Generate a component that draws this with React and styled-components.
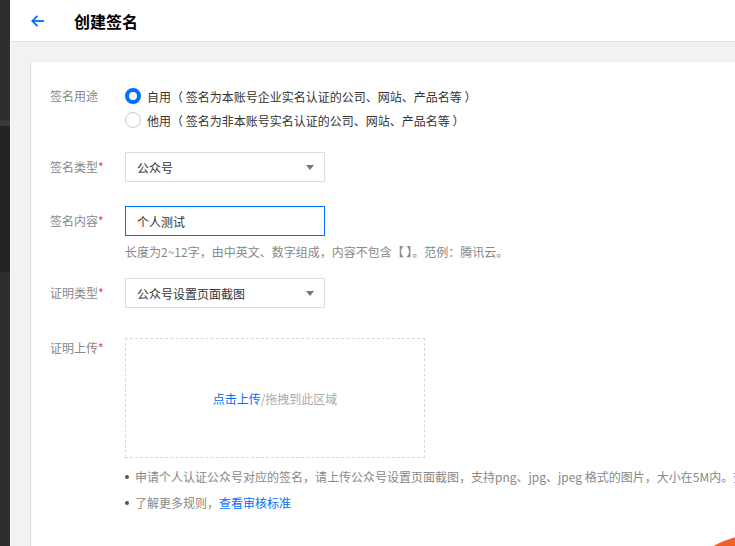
import React from 'react';
import styled, { createGlobalStyle } from 'styled-components';

//***Colors***/
const blue = '#006eff';
const grey = '#888';
const text = '#333';
const line = '#dddddd';

const GlobalStyle = createGlobalStyle`
    html, body {
        margin: 0;
        padding: 0;
        overflow: hidden;
        background: #f2f2f2;
    }
    body {
        font-family: "Noto Sans CJK SC", "Noto Sans", sans-serif;
        font-size: 12px;
        color: ${text};
    }
`;

//***Layout***/
const Shell = styled.div`
    display: flex;
    width: 735px;
    height: 546px;
    position: relative;
    overflow: hidden;
`;

const SideStrip = styled.div`
    width: 10px;
    flex-shrink: 0;
    background: linear-gradient(
        to bottom,
        #2e2e2e 0,
        #2e2e2e 120px,
        #383838 120px,
        #383838 126px,
        #232323 126px,
        #232323 272px,
        #2e2e2e 272px
    );
`;

const Main = styled.div`
    flex: 1;
    display: flex;
    flex-direction: column;
    background: #f2f2f2;
    border-left: 1px solid #fafafa;
`;

const Header = styled.div`
    height: 42px;
    flex-shrink: 0;
    background: #fff;
    border-bottom: 1px solid #e2e2e2;
    display: flex;
    align-items: center;
    padding-left: 19px;
    box-sizing: border-box;
`;

const Back = styled.span`
    display: flex;
    width: 16px;
    height: 16px;
    margin-right: 28px;
`;

const Title = styled.h1`
    margin: 0;
    font-size: 16px;
    font-weight: bold;
    color: #000;
    line-height: 22px;
`;

const Body = styled.div`
    flex: 1;
    padding: 19px 0 0 19px;
`;

const Card = styled.div`
    background: #fff;
    height: 100%;
    border-left: 1px solid #dadada;
    border-top: 1px solid #ececec;
    box-sizing: border-box;
    padding: 22px 0 0 19px;
    display: flex;
    flex-direction: column;
`;

const Row = styled.div`
    display: flex;
    margin-bottom: ${p => p.$mb || 0}px;
`;

const Label = styled.div`
    width: 75px;
    flex-shrink: 0;
    color: ${grey};
    line-height: ${p => p.$lh || 30}px;
    white-space: nowrap;
`;

const Star = styled.span`
    color: #e54545;
`;

const Field = styled.div`
    display: flex;
    flex-direction: column;
    min-width: 0;
`;

const RadioLine = styled.label`
    display: flex;
    align-items: center;
    height: 24px;
    white-space: nowrap;
    color: ${text};
`;

const RadioDot = styled.span`
    width: 16px;
    height: 16px;
    box-sizing: border-box;
    border-radius: 50%;
    margin-right: 6px;
    background: #fff;
    border: ${p => (p.$on ? `4px solid ${blue}` : '1px solid #c8c8c8')};
`;

const Control = styled.div`
    width: 200px;
    height: 30px;
    box-sizing: border-box;
    border: 1px solid ${p => (p.$focus ? blue : line)};
    display: flex;
    align-items: center;
    justify-content: space-between;
    padding: 0 10px 0 11px;
    color: ${text};
    background: #fff;
`;

const Caret = styled.span`
    width: 0;
    height: 0;
    border-left: 4px solid transparent;
    border-right: 4px solid transparent;
    border-top: 5px solid #777;
`;

const Hint = styled.div`
    color: ${grey};
    line-height: 16px;
    margin-top: 8px;
    white-space: nowrap;
`;

const Upload = styled.div`
    width: 300px;
    height: 120px;
    box-sizing: border-box;
    border: 1px dashed #d8d8d8;
    display: flex;
    align-items: center;
    justify-content: center;
    color: #aaa;
`;

const Link = styled.a`
    color: ${blue};
    text-decoration: none;
`;

const Bullets = styled.ul`
    list-style: none;
    margin: 6px 0 0;
    padding: 0;
`;

const Bullet = styled.li`
    display: flex;
    align-items: center;
    line-height: 26px;
    color: ${grey};
    white-space: nowrap;
    &::before {
        content: '';
        width: 4px;
        height: 4px;
        border-radius: 50%;
        background: #555;
        margin-right: 6px;
        flex-shrink: 0;
    }
`;

const Blob = styled.div`
    position: absolute;
    right: -34px;
    bottom: -18px;
    width: 80px;
    height: 24px;
    border-radius: 50%;
    background: #f0602a;
    transform: rotate(-22deg);
`;

const ArrowLeft = () => (
    <svg width="16" height="16" viewBox="0 0 16 16" fill="none" stroke={blue} strokeWidth="1.8">
        <path d="M14 8H2.5" />
        <path d="M7.5 2.8L2.3 8l5.2 5.2" />
    </svg>
);

const Select = ({ value }) => (
    <Control>
        <span>{value}</span>
        <Caret />
    </Control>
);

export default function App() {
    return (
        <Shell>
            <GlobalStyle />
            <SideStrip />
            <Main>
                <Header>
                    <Back><ArrowLeft /></Back>
                    <Title>创建签名</Title>
                </Header>
                <Body>
                    <Card>
                        <Row $mb={20}>
                            <Label $lh={24}>签名用途</Label>
                            <Field>
                                <RadioLine><RadioDot $on />自用（ 签名为本账号企业实名认证的公司、网站、产品名等 ）</RadioLine>
                                <RadioLine><RadioDot />他用（ 签名为非本账号实名认证的公司、网站、产品名等 ）</RadioLine>
                            </Field>
                        </Row>
                        <Row $mb={24}>
                            <Label>签名类型<Star>*</Star></Label>
                            <Select value="公众号" />
                        </Row>
                        <Row $mb={18}>
                            <Label>签名内容<Star>*</Star></Label>
                            <Field>
                                <Control $focus>个人测试</Control>
                                <Hint>长度为2~12字，由中英文、数字组成，内容不包含【 】。范例：腾讯云。</Hint>
                            </Field>
                        </Row>
                        <Row $mb={30}>
                            <Label>证明类型<Star>*</Star></Label>
                            <Select value="公众号设置页面截图" />
                        </Row>
                        <Row>
                            <Label $lh={20}>证明上传<Star>*</Star></Label>
                            <Field>
                                <Upload><Link>点击上传</Link>/拖拽到此区域</Upload>
                                <Bullets>
                                    <Bullet>申请个人认证公众号对应的签名，请上传公众号设置页面截图，支持png、jpg、jpeg 格式的图片，大小在5M内。<Link>查看示例</Link></Bullet>
                                    <Bullet>了解更多规则，<Link>查看审核标准</Link></Bullet>
                                </Bullets>
                            </Field>
                        </Row>
                    </Card>
                </Body>
            </Main>
            <Blob />
        </Shell>
    );
}
